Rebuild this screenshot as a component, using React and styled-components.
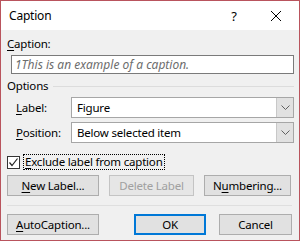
import React from 'react';
import styled, { createGlobalStyle } from 'styled-components';

const GlobalStyle = createGlobalStyle`
  body {
    margin: 0;
    font-family: 'Noto Sans', 'Open Sans', sans-serif;
    font-size: 11.5px;
    letter-spacing: -0.2px;
    color: #000;
  }
`;

const Window = styled.div`
  width: 300px;
  height: 241px;
  box-sizing: border-box;
  border: 1px solid #b9545d;
  background: #f0f0f0;
  display: flex;
  flex-direction: column;
`;

const TitleBar = styled.div`
  height: 29px;
  background: #fff;
  display: flex;
  align-items: center;
  padding-left: 8px;
`;

const Title = styled.div`
  flex: 1;
  font-size: 12px;
`;

const TitleButton = styled.div`
  width: ${p => p.w}px;
  height: 29px;
  display: flex;
  align-items: center;
  justify-content: center;
  font-size: 13px;
`;

const Body = styled.div`
  flex: 1;
  padding: 6px 5px 0 6px;
  display: flex;
  flex-direction: column;
`;

const U = styled.span`
  text-decoration: underline;
  text-underline-offset: 2px;
`;

const FieldLabel = styled.div`
  line-height: 16px;
  height: 16px;
`;

const TextBox = styled.div`
  margin: 3px 0 0 4px;
  height: 19px;
  box-sizing: border-box;
  border: 1px solid #7a7a7a;
  background: #fff;
  font-style: italic;
  font-size: 12px;
  letter-spacing: 0;
  color: #6d6d6d;
  padding-left: 3px;
  line-height: 17px;
`;

const GroupHeader = styled.div`
  margin-top: 4px;
  display: flex;
  align-items: center;
  line-height: 16px;
  gap: 5px;
  &::after {
    content: '';
    flex: 1;
    height: 1px;
    background: #dcdcdc;
    margin-top: 1px;
  }
`;

const OptionRow = styled.div`
  margin-top: ${p => p.mt}px;
  display: flex;
  align-items: center;
  padding-left: 9px;
`;

const OptionLabel = styled.div`
  width: 55px;
`;

const Select = styled.div`
  flex: 1;
  height: 21px;
  box-sizing: border-box;
  border: 1px solid #a6a6a6;
  background: #fff;
  display: flex;
  align-items: stretch;
`;

const SelectValue = styled.div`
  flex: 1;
  padding-left: 5px;
  line-height: 19px;
`;

const SelectArrow = styled.div`
  width: 16px;
  background: #e1e1e1;
  border-left: 1px solid #c8c8c8;
  display: flex;
  align-items: center;
  justify-content: center;
`;

const CheckRow = styled.div`
  margin-top: 11px;
  display: flex;
  align-items: center;
  gap: 3px;
`;

const CheckBox = styled.div`
  width: 13px;
  height: 13px;
  box-sizing: border-box;
  border: 1px solid #333;
  background: #fff;
  display: flex;
  align-items: center;
  justify-content: center;
`;

const Focus = styled.div`
  border: 1px dotted #000;
  padding: 0 1px;
  line-height: 14px;
`;

const ButtonRow = styled.div`
  margin-top: ${p => p.mt}px;
  display: flex;
  align-items: center;
`;

const Button = styled.div`
  width: ${p => p.w}px;
  margin-left: ${p => p.ml || 0}px;
  height: 21px;
  box-sizing: border-box;
  border: ${p => (p.primary ? '2px solid #0078d7' : '1px solid #adadad')};
  background: ${p => (p.disabled ? '#e6e6e6' : '#e1e1e1')};
  color: ${p => (p.disabled ? '#a0a0a0' : '#000')};
  border-color: ${p => (p.disabled ? '#c4c4c4' : p.primary ? '#0078d7' : '#adadad')};
  display: flex;
  align-items: center;
  justify-content: center;
`;

const Separator = styled.div`
  margin: 9px 2px 0 0;
  height: 1px;
  background: #dfdfdf;
`;

const Chevron = () => (
  <svg width="9" height="5" viewBox="0 0 9 5">
    <path d="M0.5 0.5 L4.5 4.5 L8.5 0.5" fill="none" stroke="#606060" strokeWidth="1" />
  </svg>
);

const CloseIcon = () => (
  <svg width="10" height="10" viewBox="0 0 10 10">
    <path d="M0 0 L10 10 M10 0 L0 10" stroke="#000" strokeWidth="1" />
  </svg>
);

const Check = () => (
  <svg width="11" height="11" viewBox="0 0 11 11">
    <path d="M1.5 5.5 L4 8.5 L9.5 1.5" fill="none" stroke="#222" strokeWidth="1.2" />
  </svg>
);

export default function App() {
  return (
    <>
      <GlobalStyle />
      <Window>
        <TitleBar>
          <Title>Caption</Title>
          <TitleButton w={38}>?</TitleButton>
          <TitleButton w={46}>
            <CloseIcon />
          </TitleButton>
        </TitleBar>
        <Body>
          <FieldLabel>
            <U>C</U>aption:
          </FieldLabel>
          <TextBox>1This is an example of a caption.</TextBox>
          <GroupHeader>Options</GroupHeader>
          <OptionRow mt={3}>
            <OptionLabel>
              <U>L</U>abel:
            </OptionLabel>
            <Select>
              <SelectValue>Figure</SelectValue>
              <SelectArrow>
                <Chevron />
              </SelectArrow>
            </Select>
          </OptionRow>
          <OptionRow mt={4}>
            <OptionLabel>
              <U>P</U>osition:
            </OptionLabel>
            <Select>
              <SelectValue>Below selected item</SelectValue>
              <SelectArrow>
                <Chevron />
              </SelectArrow>
            </Select>
          </OptionRow>
          <CheckRow>
            <CheckBox>
              <Check />
            </CheckBox>
            <Focus>
              <U>E</U>xclude label from caption
            </Focus>
          </CheckRow>
          <ButtonRow mt={5}>
            <Button w={92}>
              <U>N</U>ew Label...
            </Button>
            <Button w={85} ml={10} disabled>
              Delete Label
            </Button>
            <Button w={87} ml={10}>
              N<U>u</U>mbering...
            </Button>
          </ButtonRow>
          <Separator />
          <ButtonRow mt={8}>
            <Button w={92}>
              <U>A</U>utoCaption...
            </Button>
            <Button w={72} ml={35} primary>
              OK
            </Button>
            <Button w={73} ml={13}>
              Cancel
            </Button>
          </ButtonRow>
        </Body>
      </Window>
    </>
  );
}
